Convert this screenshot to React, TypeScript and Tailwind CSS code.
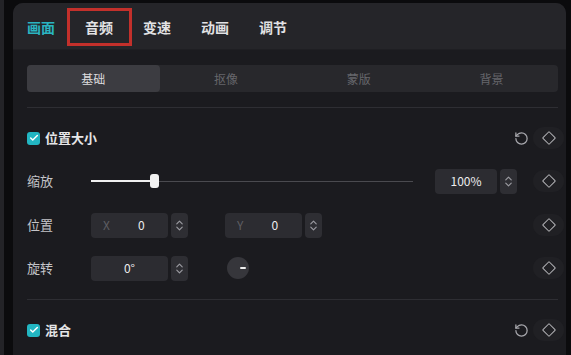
import { RotateCcw, ChevronsUpDown, Check } from 'lucide-react';

const FONT = { fontFamily: '"Noto Sans CJK SC", "Noto Sans", sans-serif' };

function Diamond() {
  return (
    <div className="w-[31px] h-[22px] rounded-full bg-[#202024] flex items-center justify-center">
      <div className="w-[10px] h-[10px] rotate-45 border-[1.5px] border-[#b4b4b8] rounded-[1px]" />
    </div>
  );
}

function Stepper() {
  return (
    <div className="w-[17px] h-[25px] rounded-[4px] bg-[#2e2e33] flex items-center justify-center">
      <ChevronsUpDown size={13} strokeWidth={2.2} className="text-[#9a9aa0]" />
    </div>
  );
}

function CheckBox() {
  return (
    <div className="w-[13px] h-[13px] rounded-[3px] bg-[#22b6c2] flex items-center justify-center">
      <Check size={10} strokeWidth={3.5} className="text-white" />
    </div>
  );
}

function SectionRow({ title, mt }: { title: string; mt: string }) {
  return (
    <div className={`${mt} h-[26px] flex items-center pl-[14px] pr-[2px]`}>
      <CheckBox />
      <span className="ml-[5px] text-[13px] font-bold text-[#e6e6e8]">{title}</span>
      <div className="ml-auto flex items-center gap-[4px]">
        <RotateCcw size={15} strokeWidth={2} className="text-[#a8a8ad]" />
        <Diamond />
      </div>
    </div>
  );
}

function Label({ children }: { children: React.ReactNode }) {
  return <span className="w-[64px] shrink-0 text-[13px] text-[#c4c4c8]">{children}</span>;
}

export default function App() {
  const tabs = ['画面', '音频', '变速', '动画', '调节'];
  const subs = ['基础', '抠像', '蒙版', '背景'];
  return (
    <div className="w-[571px] h-[355px] bg-[#0b0b0d] flex overflow-hidden" style={FONT}>
      <div className="w-[4px] h-full bg-[#232327]" />
      <div className="ml-[9px] mt-[3px] w-[553px] h-[352px] rounded-t-[10px] bg-[#1b1b1f] overflow-hidden">
        <div className="h-[47px] bg-[#252529] flex items-center pl-[14px] pt-[2px] border-b border-[#1f1f23]">
          {tabs.map((t, i) => (
            <div
              key={t}
              className={`relative text-[14px] font-bold ${i === 0 ? 'text-[#2ab4c1]' : 'text-[#e2e2e4]'} ${i === 0 ? '' : 'ml-[30px]'}`}
            >
              {t}
              {i === 1 && (
                <div className="absolute left-[-18px] top-[-9px] w-[65px] h-[38px] border-[3px] border-[#c3302b]" />
              )}
            </div>
          ))}
        </div>

        <div className="mt-[15px] ml-[14px] mr-[8px] h-[27px] rounded-[4px] bg-[#28282c] flex">
          {subs.map((s, i) => (
            <div
              key={s}
              className={`flex-1 flex items-center justify-center rounded-[4px] text-[12px] ${
                i === 0 ? 'bg-[#3c3c41] text-[#dcdcde]' : 'text-[#66666b]'
              }`}
            >
              {s}
            </div>
          ))}
        </div>

        <div className="mt-[15px] ml-[14px] mr-[8px] h-px bg-[#2e2e33]" />

        <SectionRow title="位置大小" mt="mt-[17px]" />

        <div className="mt-[17px] h-[26px] flex items-center pl-[14px] pr-[2px]">
          <Label>缩放</Label>
          <div className="relative w-[322px] h-[14px] flex items-center">
            <div className="w-full h-px bg-[#4a4a4f]" />
            <div className="absolute left-0 w-[64px] h-[2px] bg-[#f0f0f0]" />
            <div className="absolute left-[59px] w-[9px] h-[14px] rounded-[3px] bg-[#f2f2f2]" />
          </div>
          <div className="ml-[22px] w-[62px] h-[25px] rounded-[4px] bg-[#2c2c31] flex items-center justify-center text-[12px] text-[#ececee]">
            100%
          </div>
          <div className="ml-[3px]">
            <Stepper />
          </div>
          <div className="ml-auto">
            <Diamond />
          </div>
        </div>

        <div className="mt-[18px] h-[26px] flex items-center pl-[14px] pr-[2px]">
          <Label>位置</Label>
          <div className="w-[77px] h-[25px] rounded-[4px] bg-[#2c2c31] flex items-center text-[12px]">
            <span className="ml-[12px] text-[#5e5e63]">X</span>
            <span className="ml-[28px] text-[#ececee]">0</span>
          </div>
          <div className="ml-[3px]">
            <Stepper />
          </div>
          <div className="ml-[37px] w-[77px] h-[25px] rounded-[4px] bg-[#2c2c31] flex items-center text-[12px]">
            <span className="ml-[12px] text-[#5e5e63]">Y</span>
            <span className="ml-[28px] text-[#ececee]">0</span>
          </div>
          <div className="ml-[3px]">
            <Stepper />
          </div>
          <div className="ml-auto">
            <Diamond />
          </div>
        </div>

        <div className="mt-[17px] h-[26px] flex items-center pl-[14px] pr-[2px]">
          <Label>旋转</Label>
          <div className="w-[77px] h-[25px] rounded-[4px] bg-[#2c2c31] flex items-center justify-center text-[12px] text-[#ececee]">
            0°
          </div>
          <div className="ml-[3px]">
            <Stepper />
          </div>
          <div className="ml-[39px] w-[22px] h-[22px] rounded-full bg-[#36363b] flex items-center justify-end pr-[3px]">
            <div className="w-[6px] h-[2px] bg-[#f0f0f0] rounded-full" />
          </div>
          <div className="ml-auto">
            <Diamond />
          </div>
        </div>

        <div className="mt-[18px] ml-[14px] mr-[8px] h-px bg-[#2e2e33]" />

        <SectionRow title="混合" mt="mt-[17px]" />
      </div>
    </div>
  );
}
